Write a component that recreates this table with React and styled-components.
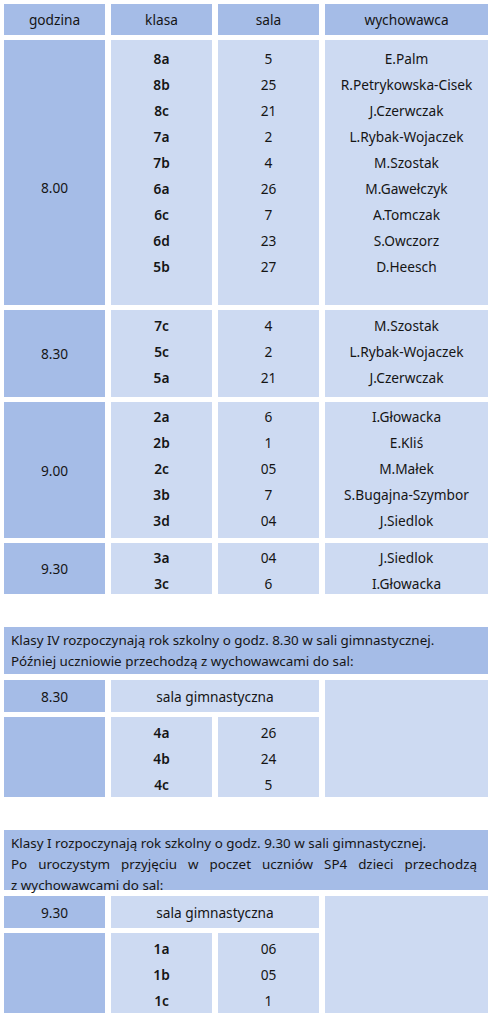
import React from 'react';
import styled, { createGlobalStyle } from 'styled-components';

const GlobalStyle = createGlobalStyle`
  body {
    margin: 0;
    background: #fff;
    font-family: "Noto Sans", "Open Sans", "Liberation Sans", sans-serif;
    font-size: 13.7px;
    color: #151515;
  }
`;

const DARK = '#a5bce7';
const LIGHT = '#cddaf2';

const groups = [
  {
    hour: '8.00', height: 265, pad: 6, shift: 30,
    rows: [
      ['8a', '5', 'E.Palm'],
      ['8b', '25', 'R.Petrykowska-Cisek'],
      ['8c', '21', 'J.Czerwczak'],
      ['7a', '2', 'L.Rybak-Wojaczek'],
      ['7b', '4', 'M.Szostak'],
      ['6a', '26', 'M.Gawełczyk'],
      ['6c', '7', 'A.Tomczak'],
      ['6d', '23', 'S.Owczorz'],
      ['5b', '27', 'D.Heesch'],
    ],
  },
  {
    hour: '8.30', height: 87, pad: 3, shift: 0,
    rows: [
      ['7c', '4', 'M.Szostak'],
      ['5c', '2', 'L.Rybak-Wojaczek'],
      ['5a', '21', 'J.Czerwczak'],
    ],
  },
  {
    hour: '9.00', height: 136, pad: 2, shift: 0,
    rows: [
      ['2a', '6', 'I.Głowacka'],
      ['2b', '1', 'E.Kliś'],
      ['2c', '05', 'M.Małek'],
      ['3b', '7', 'S.Bugajna-Szymbor'],
      ['3d', '04', 'J.Siedlok'],
    ],
  },
  {
    hour: '9.30', height: 51, pad: 2, shift: 0,
    rows: [
      ['3a', '04', 'J.Siedlok'],
      ['3c', '6', 'I.Głowacka'],
    ],
  },
];

const extra = [
  {
    first: 'Klasy IV rozpoczynają rok szkolny o godz. 8.30 w sali gimnastycznej.',
    rest: ['Później uczniowie przechodzą z wychowawcami do sal:'],
    noteHeight: 47,
    hour: '8.30',
    pad: 3,
    rows: [['4a', '26'], ['4b', '24'], ['4c', '5']],
  },
  {
    first: 'Klasy I rozpoczynają rok szkolny o godz. 9.30 w sali gimnastycznej.',
    rest: ['Po uroczystym przyjęciu w poczet uczniów SP4 dzieci przechodzą', 'z wychowawcami do sal:'],
    justify: true,
    noteHeight: 60,
    hour: '9.30',
    pad: 3,
    rows: [['1a', '06'], ['1b', '05'], ['1c', '1']],
  },
];

export default function App() {
  const rowSizes = ['31px', ...groups.map((g) => `${g.height}px`)].join(' ');
  return (
    <Page>
      <GlobalStyle />
      <Grid $rows={rowSizes}>
        <HeadCell>godzina</HeadCell>
        <HeadCell>klasa</HeadCell>
        <HeadCell>sala</HeadCell>
        <HeadCell>wychowawca</HeadCell>
        {groups.map((g) => (
          <React.Fragment key={g.hour}>
            <HourCell $shift={g.shift}>{g.hour}</HourCell>
            <ListCell $bold $pad={g.pad}>
              {g.rows.map((r) => <Line key={r[0]}>{r[0]}</Line>)}
            </ListCell>
            <ListCell $pad={g.pad}>
              {g.rows.map((r) => <Line key={r[0]}>{r[1]}</Line>)}
            </ListCell>
            <ListCell $pad={g.pad}>
              {g.rows.map((r) => <Line key={r[0]}>{r[2]}</Line>)}
            </ListCell>
          </React.Fragment>
        ))}
      </Grid>

      {extra.map((e) => (
        <Section key={e.hour}>
          <Note $height={e.noteHeight}>
            <NoteLine>{e.first}</NoteLine>
            {e.rest.map((t, i) => (
              <NoteLine key={t} $justify={e.justify && i === 0}>{t}</NoteLine>
            ))}
          </Note>
          <SubGrid>
            <SubHour>{e.hour}</SubHour>
            <Hall>sala gimnastyczna</Hall>
            <Blank />
            <SubEmpty />
            <SubList $area="klasa" $bold $pad={e.pad}>
              {e.rows.map((r) => <Line key={r[0]}>{r[0]}</Line>)}
            </SubList>
            <SubList $area="sala" $pad={e.pad}>
              {e.rows.map((r) => <Line key={r[0]}>{r[1]}</Line>)}
            </SubList>
          </SubGrid>
        </Section>
      ))}
    </Page>
  );
}

// Page wrapper
const Page = styled.div`
  padding: 4px;
  width: 484px;
`;

// Main table
const Grid = styled.div`
  display: grid;
  grid-template-columns: 101px 101px 101px 1fr;
  grid-template-rows: ${(p) => p.$rows};
  column-gap: 6px;
  row-gap: 5px;
`;

const HeadCell = styled.div`
  background: ${DARK};
  display: flex;
  align-items: center;
  justify-content: center;
`;

const HourCell = styled.div`
  background: ${DARK};
  display: flex;
  align-items: center;
  justify-content: center;
  padding-top: ${(p) => p.$shift || 0}px;
  box-sizing: border-box;
`;

const ListCell = styled.div`
  background: ${LIGHT};
  padding-top: ${(p) => p.$pad}px;
  box-sizing: border-box;
  text-align: center;
  font-weight: ${(p) => (p.$bold ? 600 : 400)};
`;

const Line = styled.div`
  line-height: 26px;
  height: 26px;
`;

// Lower notes
const Section = styled.div`
  margin-top: 33px;
`;

const Note = styled.div`
  background: ${DARK};
  height: ${(p) => p.$height}px;
  box-sizing: border-box;
  padding: 3px 11px 0 7px;
  font-size: 13.4px;
  line-height: 21px;
`;

const NoteLine = styled.div`
  text-align: ${(p) => (p.$justify ? 'justify' : 'left')};
  text-align-last: ${(p) => (p.$justify ? 'justify' : 'auto')};
`;

const SubGrid = styled.div`
  margin-top: 6px;
  display: grid;
  grid-template-columns: 101px 101px 101px 1fr;
  grid-template-rows: 32px 80px;
  column-gap: 6px;
  row-gap: 5px;
  grid-template-areas:
    'hour hall hall blank'
    'empty klasa sala blank';
`;

const SubHour = styled(HourCell)`
  grid-area: hour;
`;

const SubEmpty = styled.div`
  grid-area: empty;
  background: ${DARK};
`;

const SubList = styled(ListCell)`
  grid-area: ${(p) => p.$area};
`;

const Hall = styled.div`
  grid-area: hall;
  background: ${LIGHT};
  display: flex;
  align-items: center;
  justify-content: center;
`;

const Blank = styled.div`
  grid-area: blank;
  background: ${LIGHT};
`;
